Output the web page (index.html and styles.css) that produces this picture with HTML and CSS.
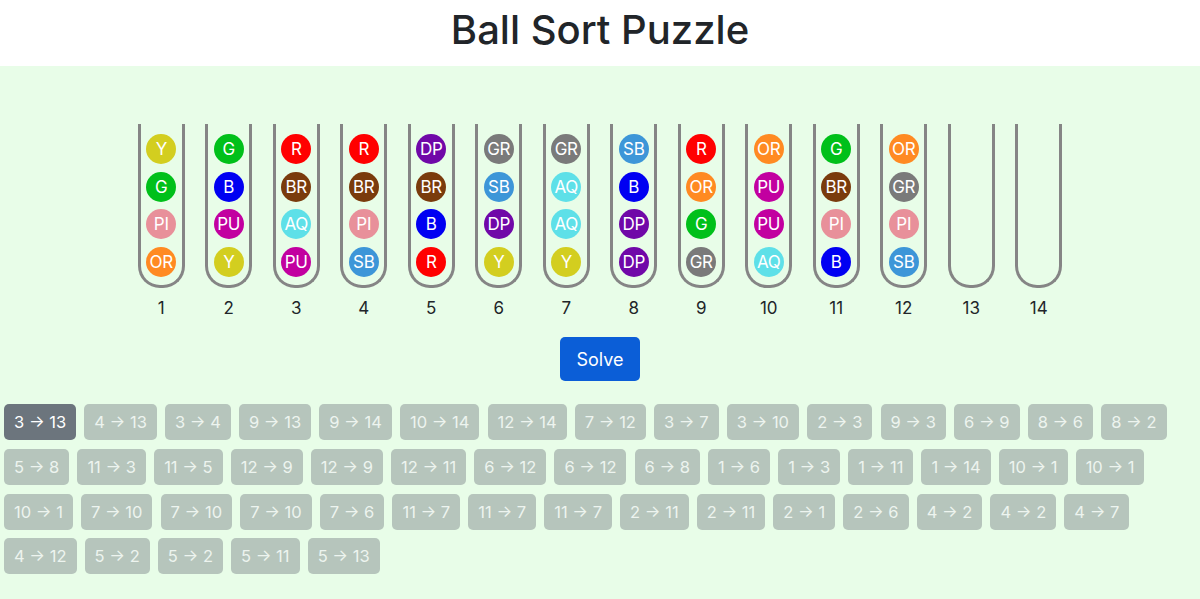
FILE: index.html
```html
<!DOCTYPE html>
<html lang="en">
<head>
    <meta charset="UTF-8">
    <meta name="viewport" content="width=device-width, initial-scale=1.0">
    <title>Ball Sort Puzzle</title>
    <link rel="stylesheet" href="styles.css">
</head>
<body>
    <header class="page-header">
        <h1>Ball Sort Puzzle</h1>
    </header>

    <main class="board">
        <div class="tubes" id="tubes"></div>

        <div class="actions">
            <button class="btn-solve" onclick="solve()">Solve</button>
        </div>

        <div class="moves" id="moves"></div>
    </main>

    <script>
        // colour codes, listed top to bottom for every tube
        const tubes = [
            ['Y', 'G', 'PI', 'OR'],
            ['G', 'B', 'PU', 'Y'],
            ['R', 'BR', 'AQ', 'PU'],
            ['R', 'BR', 'PI', 'SB'],
            ['DP', 'BR', 'B', 'R'],
            ['GR', 'SB', 'DP', 'Y'],
            ['GR', 'AQ', 'AQ', 'Y'],
            ['SB', 'B', 'DP', 'DP'],
            ['R', 'OR', 'G', 'GR'],
            ['OR', 'PU', 'PU', 'AQ'],
            ['G', 'BR', 'PI', 'B'],
            ['OR', 'GR', 'PI', 'SB'],
            [],
            []
        ];

        const solution = [
            [3, 13], [4, 13], [3, 4], [9, 13], [9, 14], [10, 14], [12, 14], [7, 12], [3, 7], [3, 10],
            [2, 3], [9, 3], [6, 9], [8, 6], [8, 2], [5, 8], [11, 3], [11, 5], [12, 9], [12, 9],
            [12, 11], [6, 12], [6, 12], [6, 8], [1, 6], [1, 3], [1, 11], [1, 14], [10, 1], [10, 1],
            [10, 1], [7, 10], [7, 10], [7, 10], [7, 6], [11, 7], [11, 7], [11, 7], [2, 11], [2, 11],
            [2, 1], [2, 6], [4, 2], [4, 2], [4, 7], [4, 12], [5, 2], [5, 2], [5, 11], [5, 13]
        ];

        function drawTubes() {
            const box = document.getElementById('tubes');
            box.innerHTML = '';
            tubes.forEach((balls, i) => {
                const col = document.createElement('div');
                col.className = 'tube-col';
                const tube = document.createElement('div');
                tube.className = 'tube';
                balls.forEach(code => {
                    const ball = document.createElement('div');
                    ball.className = 'ball ball-' + code.toLowerCase();
                    ball.textContent = code;
                    tube.appendChild(ball);
                });
                const label = document.createElement('div');
                label.className = 'tube-label';
                label.textContent = i + 1;
                col.appendChild(tube);
                col.appendChild(label);
                box.appendChild(col);
            });
        }

        function solve() {
            const list = document.getElementById('moves');
            list.innerHTML = '';
            solution.forEach(([from, to], i) => {
                const btn = document.createElement('button');
                btn.className = i === 0 ? 'move current' : 'move';
                btn.disabled = i !== 0;
                btn.textContent = `${from} \u2192 ${to}`;
                list.appendChild(btn);
            });
        }

        drawTubes();
        solve();
    </script>
</body>
</html>
```

FILE: styles.css
```css
body {
    margin: 0;
    font-family: Inter, "Liberation Sans", Arial, sans-serif;
    color: #212529;
    background-color: #FFFFFF;
}

.page-header {
    height: 66px;
    box-sizing: border-box;
    padding-top: 9.5px;
    text-align: center;
}

.page-header h1 {
    margin: 0;
    font-size: 40px;
    font-weight: 500;
    line-height: 1;
}

.board {
    background-color: #E8FDE8;
    min-height: calc(100vh - 66px);
    padding-top: 58px;
    box-sizing: border-box;
}

.tubes {
    display: flex;
    justify-content: center;
    gap: 20.5px;
}

.tube-col {
    display: flex;
    flex-direction: column;
    align-items: center;
}

.tube {
    width: 47px;
    height: 164px;
    box-sizing: border-box;
    border: 3px solid #858585;
    border-top: none;
    border-radius: 0 0 22px 22px;
    padding-bottom: 8px;
    display: flex;
    flex-direction: column;
    align-items: center;
    justify-content: flex-end;
    gap: 7.6px;
}

.ball {
    width: 30px;
    height: 30px;
    border-radius: 50%;
    color: #FFFFFF;
    font-size: 17px;
    line-height: 30px;
    display: flex;
    justify-content: center;
    white-space: nowrap;
    letter-spacing: -0.3px;
}

.ball-y { background-color: #D3CE1F; }
.ball-g { background-color: #00C01A; }
.ball-pi { background-color: #E8909A; }
.ball-or { background-color: #FF8A22; }
.ball-b { background-color: #0000F2; }
.ball-pu { background-color: #C200A0; }
.ball-r { background-color: #FF0000; }
.ball-br { background-color: #7A3B0C; }
.ball-aq { background-color: #5EE0E8; }
.ball-sb { background-color: #3D96D8; }
.ball-dp { background-color: #7008A8; }
.ball-gr { background-color: #7A7A7A; }

.tube-label {
    margin-top: 8px;
    font-size: 17px;
    line-height: 25px;
}

.actions {
    display: flex;
    justify-content: center;
    margin-top: 16px;
}

.btn-solve {
    font-family: inherit;
    font-size: 18px;
    line-height: 27px;
    padding: 8.5px 16px;
    color: #FFFFFF;
    background-color: #0B5ED7;
    border: none;
    border-radius: 5px;
    cursor: pointer;
}

.moves {
    display: flex;
    flex-wrap: wrap;
    margin-top: 19px;
    padding-bottom: 20px;
}

.move {
    font-family: inherit;
    font-size: 16.5px;
    height: 36px;
    padding: 0 10px;
    margin: 4.35px 4.05px;
    color: #EDF4EF;
    background-color: #B6C5BC;
    border: none;
    border-radius: 5px;
}

.move.current {
    color: #FFFFFF;
    background-color: #6C757D;
    cursor: pointer;
}
```
